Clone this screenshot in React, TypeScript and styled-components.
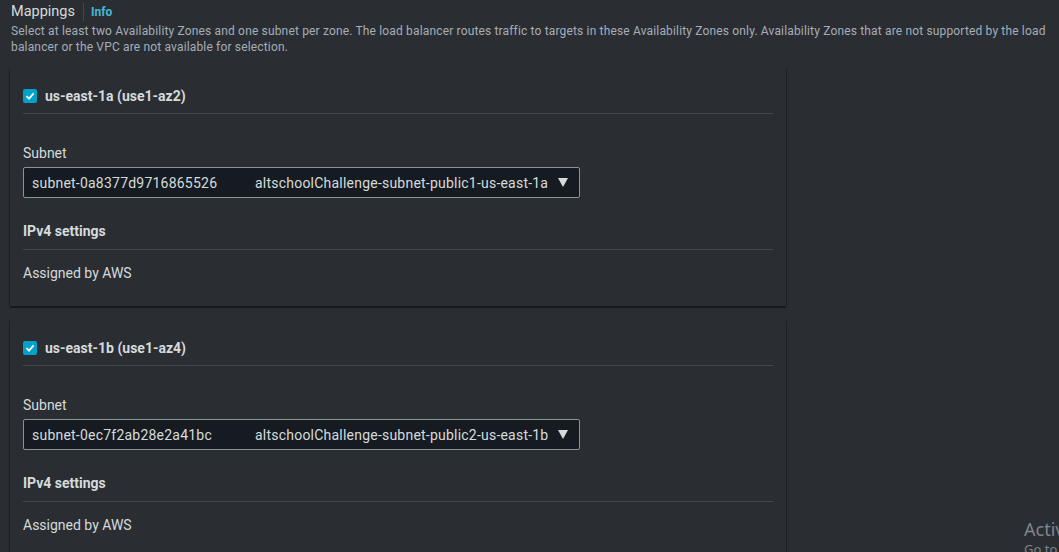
import React from "react";
import styled, { createGlobalStyle } from "styled-components";

const Global = createGlobalStyle`
  html, body { margin: 0; padding: 0; background: #2a2e33; }
  body { font-family: Roboto, "Noto Sans", Arial, sans-serif; overflow: hidden; }
  #root { width: 1059px; height: 552px; overflow: hidden; position: relative; }
`;

const Page = styled.div`
  padding: 0 12px 0 11px;
  color: #d5dbdb;
`;

const HeaderRow = styled.div`
  display: flex;
  align-items: center;
  height: 22px;
  padding-top: 1px;
`;

const Heading = styled.h2`
  margin: 0;
  font-size: 14.5px;
  font-weight: 400;
  color: #d5dbdb;
  line-height: 22px;
`;

const Sep = styled.span`
  width: 1px;
  height: 18px;
  background: #414750;
  margin: 0 7px 0 8px;
`;

const InfoLink = styled.span`
  font-size: 12px;
  font-weight: 700;
  color: #44b9d6;
`;

const Description = styled.p`
  margin: 0;
  font-size: 12px;
  line-height: 16px;
  letter-spacing: 0.16px;
  color: #a5adb7;
`;

const CardList = styled.div`
  display: flex;
  flex-direction: column;
  gap: 15px;
  margin-top: 14px;
  width: 776px;
  margin-left: -1px;
`;

const Card = styled.div`
  background: #2a2e33;
  padding: 0 13px 23px 13px;
  box-shadow: -1px 0 0 #1c1f23, 1px 0 0 #1c1f23, 0 2px 0 #17191c;
`;

const ZoneHeader = styled.div`
  display: flex;
  align-items: center;
  gap: 8px;
  padding: 17px 0 7px;
  border-bottom: 1px solid #414750;
`;

const Check = styled.span`
  width: 14px;
  height: 14px;
  border-radius: 2px;
  background: #00a1c9;
  display: inline-flex;
  align-items: center;
  justify-content: center;
`;

const ZoneTitle = styled.span`
  font-size: 14px;
  font-weight: 700;
  line-height: 20px;
  color: #d5dbdb;
`;

const FieldLabel = styled.div`
  margin-top: 29px;
  font-size: 14px;
  line-height: 20px;
  color: #d5dbdb;
`;

const Select = styled.div`
  margin-top: 4px;
  width: 557px;
  height: 31px;
  box-sizing: border-box;
  border: 1px solid #879596;
  border-radius: 2px;
  background: #161b22;
  display: flex;
  align-items: center;
  padding: 0 11px 0 8px;
  font-size: 14px;
  letter-spacing: 0.22px;
  color: #d5dbdb;
`;

const SubnetId = styled.span`
  width: 223px;
  flex: none;
`;

const SubnetName = styled.span`
  flex: 1;
`;

const Caret = styled.span`
  width: 0;
  height: 0;
  border-left: 5px solid transparent;
  border-right: 5px solid transparent;
  border-top: 9px solid #d5dbdb;
`;

const SectionTitle = styled.div`
  margin-top: 23px;
  padding-bottom: 8px;
  border-bottom: 1px solid #414750;
  font-size: 14px;
  font-weight: 700;
  line-height: 20px;
  color: #d5dbdb;
`;

const Value = styled.div`
  margin-top: 13px;
  font-size: 14px;
  line-height: 20px;
  color: #d5dbdb;
`;

const Watermark = styled.div`
  position: absolute;
  left: 1024px;
  top: 517px;
  color: #7f848b;
  font-family: "Noto Sans", sans-serif;
  font-size: 18px;
  line-height: 24px;
  white-space: nowrap;
`;

const WatermarkSub = styled.div`
  font-size: 13px;
  line-height: 16px;
`;

const zones = [
  {
    name: "us-east-1a (use1-az2)",
    id: "subnet-0a8377d9716865526",
    label: "altschoolChallenge-subnet-public1-us-east-1a",
  },
  {
    name: "us-east-1b (use1-az4)",
    id: "subnet-0ec7f2ab28e2a41bc",
    label: "altschoolChallenge-subnet-public2-us-east-1b",
  },
];

export default function App() {
  return (
    <>
      <Global />
      <Page>
        <HeaderRow>
          <Heading>Mappings</Heading>
          <Sep />
          <InfoLink>Info</InfoLink>
        </HeaderRow>
        <Description>
          Select at least two Availability Zones and one subnet per zone. The load balancer routes traffic to
          targets in these Availability Zones only. Availability Zones that are not supported by the load
          balancer or the VPC are not available for selection.
        </Description>
        <CardList>
          {zones.map((z) => (
            <Card key={z.name}>
              <ZoneHeader>
                <Check>
                  <svg width="10" height="10" viewBox="0 0 10 10">
                    <path d="M1.5 5.2 L4 7.6 L8.6 2.4" fill="none" stroke="#fff" strokeWidth="1.8" />
                  </svg>
                </Check>
                <ZoneTitle>{z.name}</ZoneTitle>
              </ZoneHeader>
              <FieldLabel>Subnet</FieldLabel>
              <Select>
                <SubnetId>{z.id}</SubnetId>
                <SubnetName>{z.label}</SubnetName>
                <Caret />
              </Select>
              <SectionTitle>IPv4 settings</SectionTitle>
              <Value>Assigned by AWS</Value>
            </Card>
          ))}
        </CardList>
      </Page>
      <Watermark>
        Activate Windows
        <WatermarkSub>Go to Settings to activate Windows.</WatermarkSub>
      </Watermark>
    </>
  );
}
